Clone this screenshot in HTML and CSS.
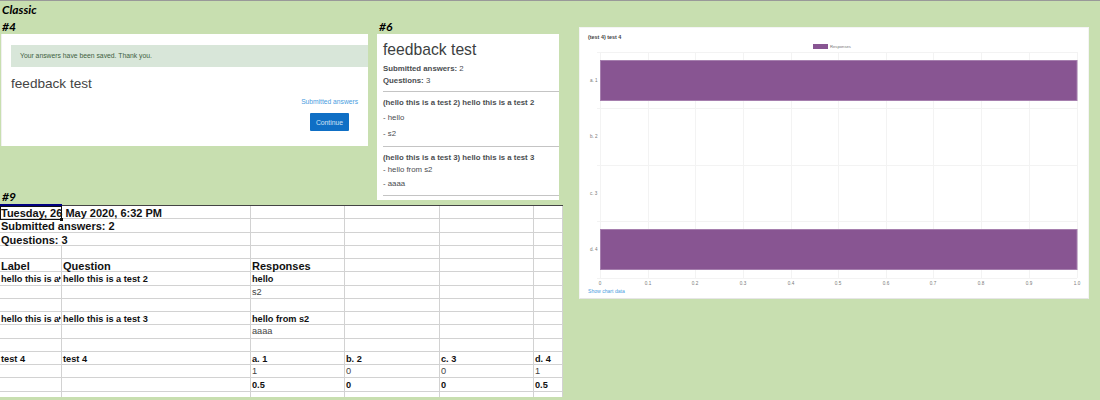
FILE: index.html
```html
<!DOCTYPE html>
<html lang="en">
<head>
<meta charset="utf-8">
<title>Classic</title>
<link rel="stylesheet" href="styles.css">
</head>
<body>
<main class="canvas">
  <h1 class="cap cap-title">Classic</h1>

  <h2 class="cap cap-4">#4</h2>
  <section class="shot shot-4">
    <p class="alert">Your answers have been saved. Thank you.</p>
    <h3 class="title-4">feedback test</h3>
    <div class="actions">
      <a class="link" href="#">Submitted answers</a>
      <button class="btn" type="button">Continue</button>
    </div>
  </section>

  <h2 class="cap cap-6">#6</h2>
  <section class="shot shot-6">
    <h3 class="title-6">feedback test</h3>
    <p class="meta"><b>Submitted answers:</b> 2</p>
    <p class="meta"><b>Questions:</b> 3</p>
    <hr class="rule">
    <p class="q">(hello this is a test 2) hello this is a test 2</p>
    <p class="a a-first">- hello</p>
    <p class="a a-wide">- s2</p>
    <hr class="rule rule-2">
    <p class="q q-2">(hello this is a test 3) hello this is a test 3</p>
    <p class="a a-tight">- hello from s2</p>
    <p class="a a-tight2">- aaaa</p>
    <hr class="rule rule-3">
  </section>

  <h2 class="cap cap-9">#9</h2>
  <section class="shot sheet">
    <div class="grid">
      <div class="c big wide">Tuesday, 26 May 2020, 6:32 PM</div><div class="c"></div><div class="c"></div><div class="c"></div><div class="c"></div>
      <div class="c big wide">Submitted answers: 2</div><div class="c"></div><div class="c"></div><div class="c"></div><div class="c"></div>
      <div class="c big wide">Questions: 3</div><div class="c"></div><div class="c"></div><div class="c"></div><div class="c"></div>
      <div class="c"></div><div class="c"></div><div class="c"></div><div class="c"></div><div class="c"></div><div class="c"></div>
      <div class="c big">Label</div><div class="c big">Question</div><div class="c big">Responses</div><div class="c"></div><div class="c"></div><div class="c"></div>
      <div class="c b clip">hello this is a test 2</div><div class="c b">hello this is a test 2</div><div class="c b">hello</div><div class="c"></div><div class="c"></div><div class="c"></div>
      <div class="c"></div><div class="c"></div><div class="c">s2</div><div class="c"></div><div class="c"></div><div class="c"></div>
      <div class="c"></div><div class="c"></div><div class="c"></div><div class="c"></div><div class="c"></div><div class="c"></div>
      <div class="c b clip">hello this is a test 3</div><div class="c b">hello this is a test 3</div><div class="c b">hello from s2</div><div class="c"></div><div class="c"></div><div class="c"></div>
      <div class="c"></div><div class="c"></div><div class="c">aaaa</div><div class="c"></div><div class="c"></div><div class="c"></div>
      <div class="c"></div><div class="c"></div><div class="c"></div><div class="c"></div><div class="c"></div><div class="c"></div>
      <div class="c b">test 4</div><div class="c b">test 4</div><div class="c b">a. 1</div><div class="c b">b. 2</div><div class="c b">c. 3</div><div class="c b">d. 4</div>
      <div class="c"></div><div class="c"></div><div class="c">1</div><div class="c">0</div><div class="c">0</div><div class="c">1</div>
      <div class="c"></div><div class="c"></div><div class="c b">0.5</div><div class="c b">0</div><div class="c b">0</div><div class="c b">0.5</div>
      <div class="c"></div><div class="c"></div><div class="c"></div><div class="c"></div><div class="c"></div><div class="c"></div>
    </div>
    <div class="selection"></div>
  </section>

  <section class="shot shot-chart">
    <h3 class="chart-title">(test 4) test 4</h3>
    <svg class="chart" width="510" height="247" viewBox="579 44 510 247" aria-label="Responses chart">
      <g class="gridlines">
        <path d="M600.5 52V278M648.5 52V278M695.5 52V278M743.5 52V278M791.5 52V278M838.5 52V278M886.5 52V278M933.5 52V278M981.5 52V278M1029.5 52V278M1077.5 52V278"/>
        <path d="M597 52.5H1077M597 108.5H1077M597 165.5H1077M597 221.5H1077M597 278.5H1077"/>
      </g>
      <rect class="swatch" x="813" y="44" width="15" height="5"/>
      <text class="legend" x="830" y="48">Responses</text>
      <rect class="bar" x="600.5" y="60.5" width="476.5" height="40"/>
      <rect class="bar" x="600.5" y="229.5" width="476.5" height="40"/>
      <g class="tick">
        <text x="590" y="82">a. 1</text>
        <text x="590" y="138">b. 2</text>
        <text x="590" y="195">c. 3</text>
        <text x="590" y="251">d. 4</text>
      </g>
      <g class="tick mid">
        <text x="600" y="285">0</text>
        <text x="648" y="285">0.1</text>
        <text x="695" y="285">0.2</text>
        <text x="743" y="285">0.3</text>
        <text x="791" y="285">0.4</text>
        <text x="838" y="285">0.5</text>
        <text x="886" y="285">0.6</text>
        <text x="933" y="285">0.7</text>
        <text x="981" y="285">0.8</text>
        <text x="1029" y="285">0.9</text>
        <text x="1077" y="285">1.0</text>
      </g>
    </svg>
    <a class="link chart-link" href="#">Show chart data</a>
  </section>
</main>
</body>
</html>
```
FILE: styles.css
```css
* { box-sizing: border-box; }
html, body { margin: 0; padding: 0; }
body { font-family: "Liberation Sans", Arial, sans-serif; color: #373a3c; }
p, h1, h2, h3, hr { margin: 0; }

.canvas {
  position: relative;
  width: 1100px;
  height: 400px;
  overflow: hidden;
  background: #c8dfb0;
  border-top: 1px solid #999;
}

.cap {
  position: absolute;
  margin: 0;
  font: italic 700 12px/14px Lato, sans-serif;
  color: #000;
}
.cap-title { left: 2px; top: 2px; }
.cap-4 { left: 2px; top: 19px; }
.cap-6 { left: 379px; top: 19px; }
.cap-9 { left: 2px; top: 189px; }

.shot { position: absolute; background: #fff; }

/* #4 */
.shot-4 {
  left: 1px; top: 33px; width: 367px; height: 112px;
  padding: 11px 0 0 9px;
  border-left: 1px solid #f0f0f0;
}
.alert {
  height: 22px;
  padding-left: 9px;
  font-size: 6.8px;
  line-height: 22px;
  color: #3f5f42;
  background: #d8e6d9;
}
.title-4 { margin-top: 8px; font-size: 13.6px; font-weight: 400; line-height: 17px; color: #444; }
.actions { display: flex; flex-direction: column; align-items: flex-end; }
.link { color: #4a9ce0; text-decoration: none; }
.actions .link { margin: 5px 10px 0 0; font-size: 6.7px; line-height: 9px; }
.btn {
  width: 39px; height: 18px;
  margin: 7px 19px 0 0;
  padding: 0;
  border: 0;
  border-radius: 1px;
  font: 6.8px "Liberation Sans", Arial, sans-serif;
  color: #cfe3f6;
  background: #0f6fc5;
}

/* #6 */
.shot-6 { left: 377px; top: 33px; width: 182px; height: 166px; padding: 6px 0 0 6px; color: #4a4d50; }
.title-6 { font-size: 15.7px; font-weight: 400; line-height: 19px; color: #3c3f42; }
.meta { font-size: 7.8px; line-height: 12px; }
.meta:first-of-type { margin-top: 4px; }
.rule { border: 0; border-top: 1px solid #c4c4c4; }
.shot-6 .rule { margin-top: 4px; }
.q { margin-top: 5px; font-size: 7.8px; font-weight: 700; line-height: 12px; }
.a { font-size: 7.8px; line-height: 12px; }
.a-first { margin-top: 3px; }
.a-wide { margin-top: 4px; }
.shot-6 .rule-2 { margin-top: 6px; }
.a-tight { margin-top: 0; }
.a-tight2 { margin-top: 2px; }
.shot-6 .rule-3 { margin-top: 5px; }

/* #9 */
.sheet { left: 0; top: 204px; width: 563px; height: 192px; border-top: 1px solid #444; }
.grid {
  display: grid;
  grid-template-columns: 62px 189px 94px 95px 94px 29px;
  grid-auto-rows: 13.25px;
  height: 191px;
  overflow: hidden;
}
.c {
  position: relative;
  min-width: 0;
  padding-left: 1px;
  font-size: 9.2px;
  line-height: 12px;
  white-space: nowrap;
  color: #444;
  border-right: 1px solid #d2d2d2;
  border-bottom: 1px solid #d2d2d2;
}
.big { font-size: 11px; font-weight: 700; line-height: 14px; color: #111; }
.wide { grid-column: span 2; }
.b { font-size: 9.2px; font-weight: 700; line-height: 14px; color: #111; }
.clip { overflow: hidden; }
.clip::after {
  content: "";
  position: absolute;
  right: 0;
  top: 4px;
  border-left: 2px solid #111;
  border-top: 2px solid transparent;
  border-bottom: 2px solid transparent;
  background: #fff;
}
.selection {
  position: absolute;
  left: 0; top: 0;
  width: 62px; height: 14px;
  border: 1px solid #111;
  box-shadow: 0 -2px 0 #000080;
}
.selection::after {
  content: "";
  position: absolute;
  right: -2px; bottom: -2px;
  width: 3px; height: 3px;
  background: #111;
}

/* chart */
.shot-chart { left: 579px; top: 26px; width: 510px; height: 272px; padding: 6px 0 0 8px; border: 1px solid #f4f4f4; border-bottom-color: #e6e6e6; }
.chart-title { font-size: 5.4px; font-weight: 700; line-height: 7px; color: #444; }
.chart { display: block; margin: 3px 0 0 -9px; }
.gridlines path { fill: none; stroke: #f3f3f3; stroke-width: 1; }
.bar { fill: #885592; stroke: #a67fae; stroke-width: 1; }
.swatch { fill: #885592; }
.tick { font-size: 4.6px; fill: #777; }
.legend { font-size: 4.2px; fill: #777; }
.mid { text-anchor: middle; }
.chart-link { display: block; margin-top: -3px; font-size: 5.1px; line-height: 7px; }
```
